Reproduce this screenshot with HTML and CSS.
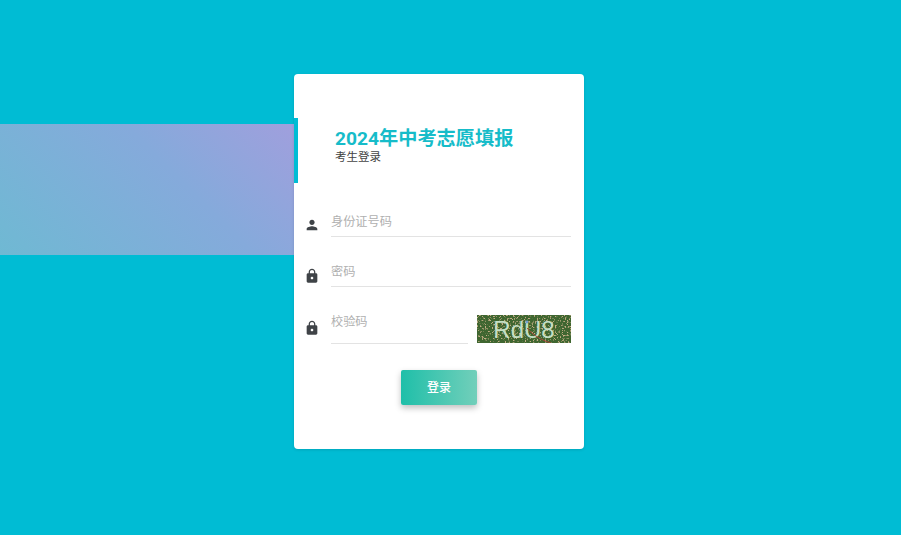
FILE: index.html
```html
<!DOCTYPE html>
<html lang="zh">
<head>
<meta charset="utf-8">
<title>考生登录</title>
<link rel="stylesheet" href="styles.css">
</head>
<body>
<div class="band"></div>
<main class="card">
  <span class="accent"></span>
  <header class="head">
    <h1 class="title">2024年中考志愿填报</h1>
    <p class="sub">考生登录</p>
  </header>
  <form class="form">
    <div class="row row-id">
      <svg class="icon" viewBox="0 0 24 24"><path d="M12 12c2.21 0 4-1.79 4-4s-1.79-4-4-4-4 1.79-4 4 1.79 4 4 4zm0 2c-2.67 0-8 1.34-8 4v2h16v-2c0-2.66-5.33-4-8-4z"/></svg>
      <div class="field"><span class="ph">身份证号码</span></div>
    </div>
    <div class="row row-pw">
      <svg class="icon lock" viewBox="0 0 24 24"><path d="M18 8h-1V6c0-2.76-2.24-5-5-5S7 3.24 7 6v2H6c-1.1 0-2 .9-2 2v10c0 1.1.9 2 2 2h12c1.1 0 2-.9 2-2V10c0-1.1-.9-2-2-2zm-6 9c-1.1 0-2-.9-2-2s.9-2 2-2 2 .9 2 2-.9 2-2 2zm3.1-9H8.9V6c0-1.71 1.39-3.1 3.1-3.1 1.71 0 3.1 1.39 3.1 3.1v2z"/></svg>
      <div class="field"><span class="ph">密码</span></div>
    </div>
    <div class="row row-code">
      <svg class="icon lock" viewBox="0 0 24 24"><path d="M18 8h-1V6c0-2.76-2.24-5-5-5S7 3.24 7 6v2H6c-1.1 0-2 .9-2 2v10c0 1.1.9 2 2 2h12c1.1 0 2-.9 2-2V10c0-1.1-.9-2-2-2zm-6 9c-1.1 0-2-.9-2-2s.9-2 2-2 2 .9 2 2-.9 2-2 2zm3.1-9H8.9V6c0-1.71 1.39-3.1 3.1-3.1 1.71 0 3.1 1.39 3.1 3.1v2z"/></svg>
      <div class="field field-code"><span class="ph">校验码</span></div>
      <div class="captcha">
        <svg class="captcha-noise" viewBox="0 0 94 28">
          <filter id="noise" x="0" y="0" width="100%" height="100%">
            <feTurbulence type="fractalNoise" baseFrequency="0.6" numOctaves="2" seed="7"/>
            <feColorMatrix type="matrix" values="0 0 0 0 .56  0 0 0 0 .42  0 0 0 0 .24  7 0 0 0 -3.9"/>
          </filter>
          <rect width="94" height="28" filter="url(#noise)"/>
        </svg>
        <span class="captcha-text">RdU8</span>
        <svg class="captcha-line" viewBox="0 0 94 28"><path d="M50 13 C 56 20, 64 25, 74 28" fill="none" stroke="#a5443a" stroke-width="1"/><circle cx="50" cy="7" r="1.4" fill="#6f9fd0"/></svg>
      </div>
    </div>
    <div class="actions"><button type="button" class="btn">登录</button></div>
  </form>
</main>
</body>
</html>
```
FILE: styles.css
```css
* { box-sizing: border-box; }
html, body { margin: 0; height: 100%; }
body {
  background: #00bcd4;
  font-family: Roboto, "Noto Sans CJK SC", sans-serif;
  overflow: hidden;
  padding: 74px 0 0 294px;
}
.band {
  position: absolute;
  left: 0;
  top: 124px;
  width: 294px;
  height: 131px;
  background: linear-gradient(45deg, #6fb9d3, #85aadb 60%, #a09fdd);
}
.card {
  position: relative;
  width: 290px;
  height: 375px;
  background: #fff;
  border-radius: 4px;
  box-shadow: 0 1px 3px rgba(0, 0, 0, .12);
}
.accent {
  position: absolute;
  left: 0;
  top: 44px;
  width: 4px;
  height: 65px;
  background: #00bcd4;
}
.head { padding: 54px 0 0 41px; }
.title {
  margin: 0;
  font-size: 19.2px;
  line-height: 22px;
  font-weight: 700;
  color: #16bcc9;
}
.sub {
  margin: 0;
  font-size: 11.5px;
  line-height: 14px;
  color: #444;
}
.form { padding: 0 13px 0 10px; }
.row { display: flex; align-items: flex-end; }
.row-id { margin-top: 37px; height: 36px; }
.row-pw { margin-top: 14px; height: 36px; }
.row-code { margin-top: 14px; height: 43px; }
.icon {
  width: 16px;
  height: 16px;
  flex: none;
  fill: #3f4347;
  margin: 0 11px 4px 0;
}
.lock { margin-bottom: 3px; }
.row-code .lock { margin-bottom: 8px; }
.field {
  flex: 1;
  height: 100%;
  border-bottom: 1px solid #e3e3e3;
  padding-top: 14px;
}
.ph {
  display: block;
  font-size: 12.2px;
  line-height: 15px;
  color: #b0b0b0;
}
.field-code { flex: none; width: 137px; }
.captcha {
  position: relative;
  width: 94px;
  height: 28px;
  margin: 0 0 1px 9px;
  overflow: hidden;
  text-align: center;
  background-color: #3f6630;
}
.captcha-noise {
  position: absolute;
  left: 0;
  top: 0;
  width: 94px;
  height: 28px;
}
.captcha-text {
  position: relative;
  display: block;
  font-family: "Liberation Sans", sans-serif;
  font-size: 24px;
  line-height: 29px;
  color: #c4dfc4;
}
.captcha-line {
  position: absolute;
  left: 0;
  top: 0;
  width: 94px;
  height: 28px;
}
.actions { display: flex; justify-content: center; margin-top: 26px; padding-left: 3px; }
.btn {
  width: 76px;
  height: 35px;
  border: 0;
  border-radius: 2px;
  padding: 0 0 2px;
  font: 500 12px Roboto, "Noto Sans CJK SC", sans-serif;
  color: #fff;
  background: linear-gradient(to right, #1fbfa9, #72cfba);
  box-shadow: 0 3px 6px rgba(0, 0, 0, .25);
}
```
